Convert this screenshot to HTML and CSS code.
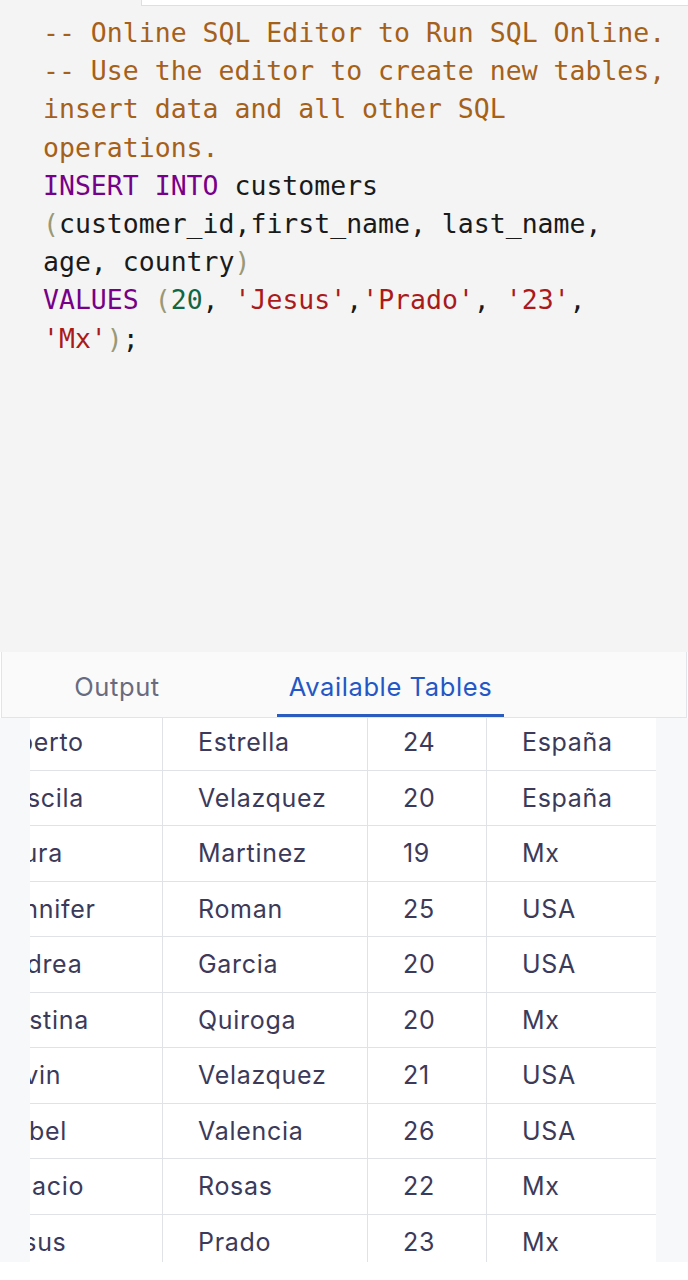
FILE: index.html
```html
<!DOCTYPE html>
<html lang="es">
<head>
<meta charset="utf-8">
<title>Online SQL Editor</title>
<link rel="stylesheet" href="styles.css">
</head>
<body>
<div class="page">
  <div class="topbar">
    <div class="topbar-left"></div>
    <div class="topbar-tab"></div>
  </div>
  <div class="editor">
<pre class="code"><span class="cm">-- Online SQL Editor to Run SQL Online.</span>
<span class="cm">-- Use the editor to create new tables,</span>
<span class="cm">insert data and all other SQL</span>
<span class="cm">operations.</span>
<span class="kw">INSERT</span> <span class="kw">INTO</span> customers
<span class="br">(</span>customer_id,first_name, last_name,
age, country<span class="br">)</span>
<span class="kw">VALUES</span> <span class="br">(</span><span class="num">20</span>, <span class="str">'Jesus'</span>,<span class="str">'Prado'</span>, <span class="str">'23'</span>,
<span class="str">'Mx'</span><span class="br">)</span>;</pre>
  </div>
  <div class="tabs">
    <div class="tab">Output</div>
    <div class="tab active">Available Tables</div>
  </div>
  <div class="results">
    <div class="viewport">
      <table class="grid">
        <colgroup>
          <col class="c1"><col class="c2"><col class="c3"><col class="c4">
        </colgroup>
        <tbody>
          <tr><td>Alberto</td><td>Estrella</td><td>24</td><td>España</td></tr>
          <tr><td>Priscila</td><td>Velazquez</td><td>20</td><td>España</td></tr>
          <tr><td>Laura</td><td>Martinez</td><td>19</td><td>Mx</td></tr>
          <tr><td>Jennifer</td><td>Roman</td><td>25</td><td>USA</td></tr>
          <tr><td>Andrea</td><td>Garcia</td><td>20</td><td>USA</td></tr>
          <tr><td>Cristina</td><td>Quiroga</td><td>20</td><td>Mx</td></tr>
          <tr><td>Kevin</td><td>Velazquez</td><td>21</td><td>USA</td></tr>
          <tr><td>Isabel</td><td>Valencia</td><td>26</td><td>USA</td></tr>
          <tr><td>Ignacio</td><td>Rosas</td><td>22</td><td>Mx</td></tr>
          <tr><td>Jesus</td><td>Prado</td><td>23</td><td>Mx</td></tr>
        </tbody>
      </table>
    </div>
  </div>
</div>
</body>
</html>
```
FILE: styles.css
```css
* { box-sizing: border-box; }
html, body { margin: 0; padding: 0; background: #ffffff; }
.page { width: 688px; height: 1280px; overflow: hidden; background: #ffffff; }

.topbar { display: flex; height: 6px; background: #f4f4f4; }
.topbar-left { width: 141px; }
.topbar-tab { flex: 1; background: #ffffff; border-left: 1px solid #dcdfe4; border-bottom: 1px solid #dcdfe4; }

.editor { height: 646px; background: #f4f4f4; padding: 8px 0 0 43px; }
.code {
  margin: 0;
  font-family: "DejaVu Sans Mono", "Liberation Mono", monospace;
  font-size: 26.5px;
  line-height: 38.2px;
  color: #1a1a1a;
  white-space: pre;
}
.cm { color: #a5601a; }
.kw { color: #770088; }
.str { color: #aa1a1a; }
.num { color: #116644; }
.br { color: #999977; }

.tabs {
  display: flex;
  gap: 46px;
  height: 66px;
  margin: 0 1px;
  background: #fafafa;
  border: 1px solid #e1e4e8;
  border-top: none;
  padding-left: 1px;
  font-family: "Inter", "Noto Sans", sans-serif;
  font-size: 25.5px;
  letter-spacing: 0.6px;
}
.tab {
  width: 228px;
  display: flex;
  align-items: center;
  justify-content: center;
  color: #6a6a7e;
  padding-top: 4px;
}
.tab.active {
  width: 227px;
  color: #2457c5;
  border-bottom: 3px solid #2a5cc0;
  padding-top: 7px;
}

.results {
  display: flex;
  height: 544px;
  background: #f7f8fa;
  padding: 0 32px 0 30px;
}
.viewport { flex: 1; overflow: hidden; background: #ffffff; }
.grid {
  border-collapse: collapse;
  table-layout: fixed;
  width: 692px;
  margin-left: -66px;
  margin-top: -4px;
  font-family: "Inter", "Noto Sans", sans-serif;
  font-size: 25px;
  letter-spacing: 0.7px;
  color: #3c3a5a;
}
.c1 { width: 198px; }
.c2 { width: 205px; }
.c3 { width: 119px; }
.c4 { width: 170px; }
.grid td {
  height: 55.5px;
  padding: 0 0 0 35px;
  border: 1px solid #dfe2e6;
  white-space: nowrap;
  overflow: hidden;
}
.grid td:first-child { padding-left: 28px; }
```
